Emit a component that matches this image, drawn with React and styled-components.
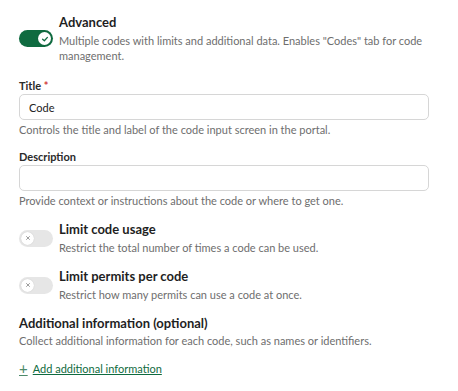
import styled, { createGlobalStyle } from "styled-components";

const GlobalStyle = createGlobalStyle`
  body {
    margin: 0;
    background: #fff;
    font-family: Lato, "Noto Sans", sans-serif;
    color: #1f1f1f;
  }
`;

const App = () => {
  return (
    <>
      <GlobalStyle />
      <Page>
        <ToggleRow>
          <Switch on>
            <Knob on>
              <svg width="8" height="8" viewBox="0 0 10 10">
                <path d="M2 5.2 L4.2 7.2 L8 3" fill="none" stroke="#0f6b40" strokeWidth="1.6" strokeLinecap="round" strokeLinejoin="round" />
              </svg>
            </Knob>
          </Switch>
          <ToggleText>
            <ToggleTitle>Advanced</ToggleTitle>
            <Hint>
              Multiple codes with limits and additional data. Enables "Codes" tab for code
              management.
            </Hint>
          </ToggleText>
        </ToggleRow>

        <Field>
          <Label>
            Title <Req>*</Req>
          </Label>
          <Input defaultValue="Code" />
          <Hint>Controls the title and label of the code input screen in the portal.</Hint>
        </Field>

        <Field>
          <Label>Description</Label>
          <Input />
          <Hint>Provide context or instructions about the code or where to get one.</Hint>
        </Field>

        <ToggleRow>
          <Switch>
            <Knob>
              <svg width="6" height="6" viewBox="0 0 10 10">
                <path d="M2.5 2.5 L7.5 7.5 M7.5 2.5 L2.5 7.5" stroke="#999" strokeWidth="1.6" strokeLinecap="round" />
              </svg>
            </Knob>
          </Switch>
          <ToggleText>
            <ToggleTitle>Limit code usage</ToggleTitle>
            <Hint>Restrict the total number of times a code can be used.</Hint>
          </ToggleText>
        </ToggleRow>

        <ToggleRow>
          <Switch>
            <Knob>
              <svg width="6" height="6" viewBox="0 0 10 10">
                <path d="M2.5 2.5 L7.5 7.5 M7.5 2.5 L2.5 7.5" stroke="#999" strokeWidth="1.6" strokeLinecap="round" />
              </svg>
            </Knob>
          </Switch>
          <ToggleText>
            <ToggleTitle>Limit permits per code</ToggleTitle>
            <Hint>Restrict how many permits can use a code at once.</Hint>
          </ToggleText>
        </ToggleRow>

        <Section>
          <SectionTitle>Additional information (optional)</SectionTitle>
          <Hint>Collect additional information for each code, such as names or identifiers.</Hint>
        </Section>

        <AddLink>
          <Plus>+</Plus>
          <span>Add additional information</span>
        </AddLink>
      </Page>
    </>
  );
};

export default App;

const Page = styled.div`
  width: 410px;
  padding: 14px 0 0 19px;
  display: flex;
  flex-direction: column;
`;

const ToggleRow = styled.div`
  display: flex;
  gap: 6px;
  align-items: center;
  margin-bottom: 13px;

  &:first-child {
    margin-bottom: 16px;
  }
`;

const Switch = styled.div`
  width: 34px;
  height: 17px;
  border-radius: 9px;
  background: ${(p) => (p.on ? "#0f6b40" : "#e6e6e6")};
  display: flex;
  align-items: center;
  justify-content: ${(p) => (p.on ? "flex-end" : "flex-start")};
  padding: 0 2px;
  box-sizing: border-box;
  flex-shrink: 0;
`;

const Knob = styled.div`
  width: 13px;
  height: 13px;
  border-radius: 50%;
  background: #fff;
  display: flex;
  align-items: center;
  justify-content: center;
  box-shadow: 0 0 1px rgba(0, 0, 0, 0.2);
`;

const ToggleText = styled.div`
  display: flex;
  flex-direction: column;
  gap: 3px;
`;

const ToggleTitle = styled.div`
  font-size: 13px;
  font-weight: 700;
  color: #1f1f1f;
  line-height: 16px;
`;

const Hint = styled.div`
  font-size: 11px;
  line-height: 15px;
  color: #6e6e6e;
`;

const Field = styled.div`
  display: flex;
  flex-direction: column;
  margin-bottom: 13px;
`;

const Label = styled.div`
  font-size: 11px;
  font-weight: 700;
  color: #2a2a2a;
  line-height: 14px;
  margin-bottom: 1px;
`;

const Req = styled.span`
  color: #d23b3b;
`;

const Input = styled.input`
  height: 26px;
  box-sizing: border-box;
  border: 1px solid #d6d6d6;
  border-radius: 5px;
  padding: 0 9px;
  font-family: inherit;
  font-size: 11px;
  color: #222;
  margin-bottom: 2px;
  outline: none;
`;

const Section = styled.div`
  display: flex;
  flex-direction: column;
  gap: 2px;
`;

const SectionTitle = styled.div`
  font-size: 13px;
  font-weight: 700;
  color: #1f1f1f;
  line-height: 16px;
`;

const AddLink = styled.a`
  display: flex;
  align-items: center;
  gap: 5px;
  margin-top: 13px;
  font-size: 11px;
  color: #0f6b40;
  cursor: pointer;

  span {
    text-decoration: underline;
  }
`;

const Plus = styled.span`
  font-size: 15px;
  line-height: 1;
  color: #4d8a6a;
`;
